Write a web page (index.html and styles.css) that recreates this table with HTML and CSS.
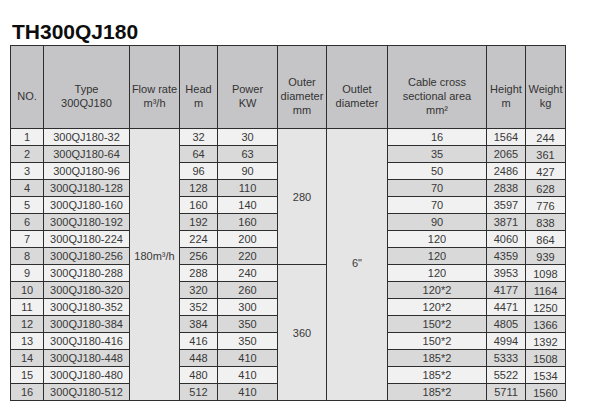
FILE: index.html
```html
<!DOCTYPE html>
<html>
<head>
<meta charset="utf-8">
<link rel="stylesheet" href="styles.css">
</head>
<body>
<h1 class="title">TH300QJ180</h1>
<table class="spec">
<colgroup>
<col class="c-no"><col class="c-type"><col class="c-flow"><col class="c-head"><col class="c-power"><col class="c-outer"><col class="c-outlet"><col class="c-cable"><col class="c-height"><col class="c-weight">
</colgroup>
<thead>
<tr class="hdr">
<th>NO.</th>
<th>Type<br>300QJ180</th>
<th>Flow rate<br>m³/h</th>
<th>Head<br>m</th>
<th>Power<br>KW</th>
<th>Outer<br>diameter<br>mm</th>
<th>Outlet<br>diameter</th>
<th>Cable cross<br>sectional area<br>mm²</th>
<th>Height<br>m</th>
<th>Weight<br>kg</th>
</tr>
</thead>
<tbody>
<tr class="odd"><td>1</td><td>300QJ180-32</td><td class="merged flow" rowspan="16">180m³/h</td><td>32</td><td>30</td><td class="merged" rowspan="8">280</td><td class="merged outlet" rowspan="16">6"</td><td>16</td><td>1564</td><td class="wt">244</td></tr>
<tr class="even"><td>2</td><td>300QJ180-64</td><td>64</td><td>63</td><td>35</td><td>2065</td><td class="wt">361</td></tr>
<tr class="odd"><td>3</td><td>300QJ180-96</td><td>96</td><td>90</td><td>50</td><td>2486</td><td class="wt">427</td></tr>
<tr class="even"><td>4</td><td>300QJ180-128</td><td>128</td><td>110</td><td>70</td><td>2838</td><td class="wt">628</td></tr>
<tr class="odd"><td>5</td><td>300QJ180-160</td><td>160</td><td>140</td><td>70</td><td>3597</td><td class="wt">776</td></tr>
<tr class="even"><td>6</td><td>300QJ180-192</td><td>192</td><td>160</td><td>90</td><td>3871</td><td class="wt">838</td></tr>
<tr class="odd"><td>7</td><td>300QJ180-224</td><td>224</td><td>200</td><td>120</td><td>4060</td><td class="wt">864</td></tr>
<tr class="even"><td>8</td><td>300QJ180-256</td><td>256</td><td>220</td><td>120</td><td>4359</td><td class="wt">939</td></tr>
<tr class="odd"><td>9</td><td>300QJ180-288</td><td>288</td><td>240</td><td class="merged" rowspan="8">360</td><td>120</td><td>3953</td><td class="wt">1098</td></tr>
<tr class="even"><td>10</td><td>300QJ180-320</td><td>320</td><td>260</td><td>120*2</td><td>4177</td><td class="wt">1164</td></tr>
<tr class="odd"><td>11</td><td>300QJ180-352</td><td>352</td><td>300</td><td>120*2</td><td>4471</td><td class="wt">1250</td></tr>
<tr class="even"><td>12</td><td>300QJ180-384</td><td>384</td><td>350</td><td>150*2</td><td>4805</td><td class="wt">1366</td></tr>
<tr class="odd"><td>13</td><td>300QJ180-416</td><td>416</td><td>350</td><td>150*2</td><td>4994</td><td class="wt">1392</td></tr>
<tr class="even"><td>14</td><td>300QJ180-448</td><td>448</td><td>410</td><td>185*2</td><td>5333</td><td class="wt">1508</td></tr>
<tr class="odd"><td>15</td><td>300QJ180-480</td><td>480</td><td>410</td><td>185*2</td><td>5522</td><td class="wt">1534</td></tr>
<tr class="even"><td>16</td><td>300QJ180-512</td><td>512</td><td>410</td><td>185*2</td><td>5711</td><td class="wt">1560</td></tr>
</tbody>
</table>
</body>
</html>
```
FILE: styles.css
```css
html, body {
  margin: 0;
  padding: 0;
  background: #ffffff;
}
body {
  padding-left: 10px;
  font-family: "Liberation Sans", Arial, sans-serif;
}
.title {
  margin: 20px 0 1px 2px;
  font-size: 21px;
  line-height: 24px;
  font-weight: bold;
  color: #0d0d0d;
}
.spec {
  border-collapse: collapse;
  table-layout: fixed;
  width: 556px;
  font-size: 11px;
  line-height: 12px;
  color: #383838;
  border: 1px solid #5a5a5a;
}
.c-no { width: 33px; }
.c-type { width: 86px; }
.c-flow { width: 50px; }
.c-head { width: 38px; }
.c-power { width: 60px; }
.c-outer { width: 49px; }
.c-outlet { width: 61px; }
.c-cable { width: 99px; }
.c-height { width: 39px; }
.c-weight { width: 40px; }
.spec tr.hdr {
  height: 83px;
}
.spec th {
  padding: 18px 0 0 0;
  background: #c5c5c7;
  font-weight: normal;
  line-height: 14px;
  color: #333333;
  border: 1px solid #2e2e2e;
  text-align: center;
  vertical-align: middle;
}
.spec tbody tr {
  height: 17px;
}
.spec td {
  padding: 0;
  text-align: center;
  vertical-align: middle;
  border: 1px solid #2e2e2e;
  white-space: nowrap;
}
.spec tr.odd td {
  background: #f1f1f1;
}
.spec tr.even td {
  background: #d9d9d9;
}
.spec tr td.merged {
  background: #e5e5e5;
}
.spec td.flow {
  padding-bottom: 18px;
}
.spec td.outlet {
  padding-bottom: 4px;
}
.spec td.wt {
  padding-top: 2px;
}
```
